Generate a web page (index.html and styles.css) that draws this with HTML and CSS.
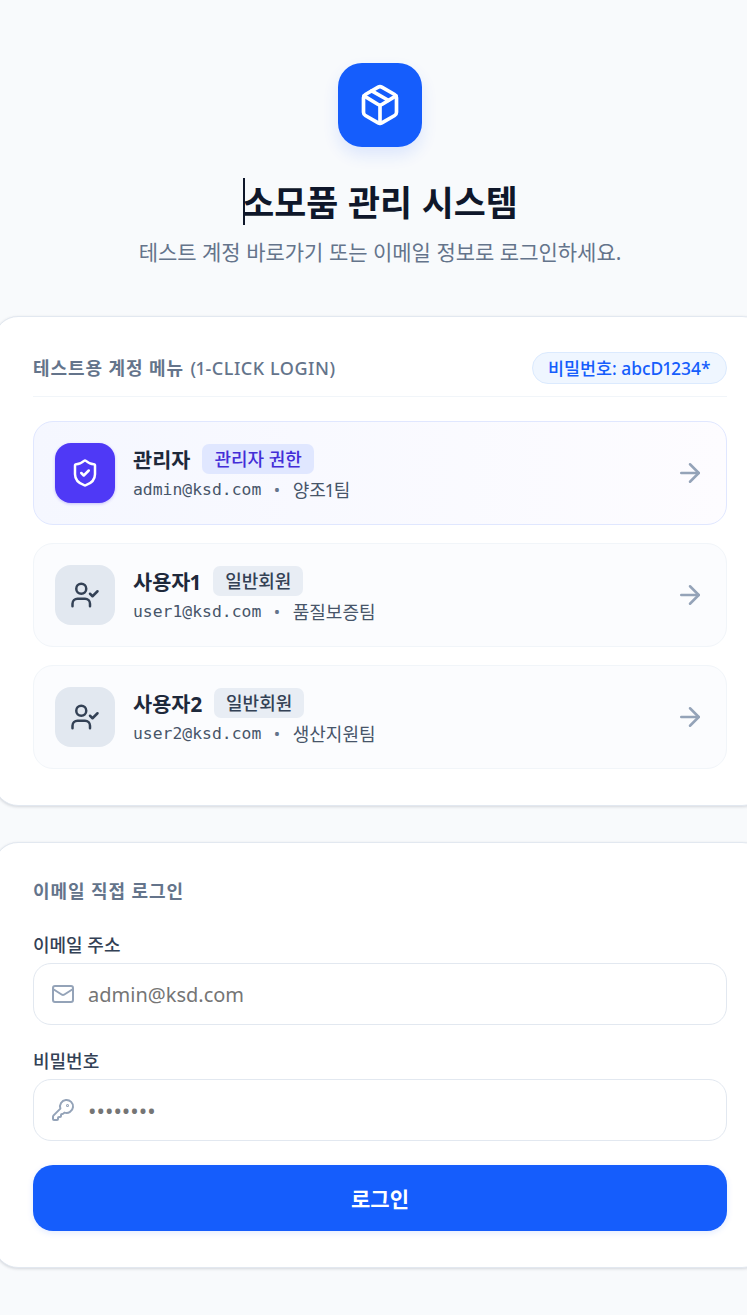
FILE: index.html
```html
<!DOCTYPE html>
<html lang="ko">
<head>
<meta charset="utf-8">
<title>소모품 관리 시스템</title>
<link rel="stylesheet" href="styles.css">
</head>
<body>
<main class="page">
  <header class="hero">
    <div class="logo">
      <svg class="ic ic-logo" viewBox="0 0 24 24"><path d="M11 21.73a2 2 0 0 0 2 0l7-4A2 2 0 0 0 21 16V8a2 2 0 0 0-1-1.73l-7-4a2 2 0 0 0-2 0l-7 4A2 2 0 0 0 3 8v8a2 2 0 0 0 1 1.73z"/><path d="M12 22V12"/><path d="m3.3 7 7.703 4.734a2 2 0 0 0 1.994 0L20.7 7"/><path d="m7.5 4.27 9 5.15"/></svg>
    </div>
    <h1 class="title"><span class="caret"></span>소모품 관리 시스템</h1>
    <p class="subtitle">테스트 계정 바로가기 또는 이메일 정보로 로그인하세요.</p>
  </header>

  <section class="card card-accounts">
    <div class="card-head">
      <h2 class="section-title">테스트용 계정 메뉴 <span class="section-latin">(1-CLICK LOGIN)</span></h2>
      <span class="pill">비밀번호: abcD1234*</span>
    </div>
    <div class="rows">
      <div class="row row-admin">
        <div class="avatar avatar-admin">
          <svg class="ic ic-30" viewBox="0 0 24 24"><path d="M20 13c0 5-3.5 7.5-7.66 8.95a1 1 0 0 1-.67-.01C7.5 20.5 4 18 4 13V6a1 1 0 0 1 1-1c2 0 4.5-1.2 6.24-2.72a1.17 1.17 0 0 1 1.52 0C14.51 3.81 17 5 19 5a1 1 0 0 1 1 1z"/><path d="m9 12 2 2 4-4"/></svg>
        </div>
        <div class="info">
          <div class="name-line"><span class="name">관리자</span><span class="badge badge-admin">관리자 권한</span></div>
          <div class="meta"><span class="mono">admin@ksd.com</span><span class="dot">•</span><span>양조1팀</span></div>
        </div>
        <svg class="ic ic-30 ic-arrow" viewBox="0 0 24 24"><path d="M5 12h14"/><path d="m12 5 7 7-7 7"/></svg>
      </div>
      <div class="row">
        <div class="avatar">
          <svg class="ic ic-30" viewBox="0 0 24 24"><path d="m16 11 2 2 4-4"/><path d="M16 21v-2a4 4 0 0 0-4-4H6a4 4 0 0 0-4 4v2"/><circle cx="9" cy="7" r="4"/></svg>
        </div>
        <div class="info">
          <div class="name-line"><span class="name">사용자1</span><span class="badge">일반회원</span></div>
          <div class="meta"><span class="mono">user1@ksd.com</span><span class="dot">•</span><span>품질보증팀</span></div>
        </div>
        <svg class="ic ic-30 ic-arrow" viewBox="0 0 24 24"><path d="M5 12h14"/><path d="m12 5 7 7-7 7"/></svg>
      </div>
      <div class="row">
        <div class="avatar">
          <svg class="ic ic-30" viewBox="0 0 24 24"><path d="m16 11 2 2 4-4"/><path d="M16 21v-2a4 4 0 0 0-4-4H6a4 4 0 0 0-4 4v2"/><circle cx="9" cy="7" r="4"/></svg>
        </div>
        <div class="info">
          <div class="name-line"><span class="name">사용자2</span><span class="badge">일반회원</span></div>
          <div class="meta"><span class="mono">user2@ksd.com</span><span class="dot">•</span><span>생산지원팀</span></div>
        </div>
        <svg class="ic ic-30 ic-arrow" viewBox="0 0 24 24"><path d="M5 12h14"/><path d="m12 5 7 7-7 7"/></svg>
      </div>
    </div>
  </section>

  <section class="card card-form">
    <h2 class="section-title form-title">이메일 직접 로그인</h2>
    <label class="label" for="email">이메일 주소</label>
    <div class="field">
      <svg class="ic ic-field" viewBox="0 0 24 24"><path d="m22 7-8.991 5.727a2 2 0 0 1-2.009 0L2 7"/><rect x="2" y="4" width="20" height="16" rx="2"/></svg>
      <input class="input" id="email" type="email" placeholder="admin@ksd.com">
    </div>
    <label class="label label-pw" for="pw">비밀번호</label>
    <div class="field">
      <svg class="ic ic-field" viewBox="0 0 24 24"><path d="M2.586 17.414A2 2 0 0 0 2 18.828V21a1 1 0 0 0 1 1h3a1 1 0 0 0 1-1v-1a1 1 0 0 1 1-1h1a1 1 0 0 0 1-1v-1a1 1 0 0 1 1-1h.172a2 2 0 0 0 1.414-.586l.814-.814a6.5 6.5 0 1 0-4-4z"/><circle cx="16.5" cy="7.5" r=".5"/></svg>
      <input class="input input-pw" id="pw" type="password" placeholder="••••••••">
    </div>
    <button class="submit" type="button">로그인</button>
  </section>
</main>
</body>
</html>
```
FILE: styles.css
```css
* { box-sizing: border-box; }
html, body { margin: 0; padding: 0; overflow-x: hidden; }
body {
  background: #f8fafc;
  color: #0f172a;
  font-family: "Noto Sans", "Noto Sans CJK KR", sans-serif;
  font-variant-numeric: proportional-nums;
}
.page { width: 760px; padding: 63px 0 47px; }

.hero { display: flex; flex-direction: column; align-items: center; margin-bottom: 48px; }
.logo {
  width: 84px; height: 84px; border-radius: 24px; background: #155dfc;
  display: flex; align-items: center; justify-content: center;
  box-shadow: 0 8px 16px rgba(21, 93, 252, .12);
}
.ic { fill: none; stroke: currentColor; stroke-width: 2; stroke-linecap: round; stroke-linejoin: round; flex: none; display: block; }
.ic-logo { width: 44px; height: 44px; color: #fff; }
.ic-30 { width: 30px; height: 30px; }
.ic-arrow { color: #94a3b8; }
.ic-field { width: 24px; height: 24px; color: #94a3b8; }

.title { margin: 31px 0 0; font-size: 34.8px; line-height: 47px; font-weight: 700; font-family: "Noto Sans CJK KR", sans-serif; position: relative; }
.caret { position: absolute; left: 1px; top: 0; width: 2px; height: 47px; background: #0f172a; }
.subtitle { margin: 11px 0 0; font-size: 21px; line-height: 32px; color: #64748b; }

.card {
  margin: 0 -6px;
  background: #fff; border: 1px solid #e2e8f0; border-radius: 24px;
  padding: 35px 38px; box-shadow: 0 1px 3px rgba(15, 23, 42, .15);
}
.card-accounts { margin-bottom: 36px; padding-bottom: 36px; }
.card-head { display: flex; justify-content: space-between; align-items: flex-start; height: 45px; border-bottom: 1px solid #f1f5f9; }
.section-title { margin: 0; font-size: 18px; line-height: 32px; font-weight: 600; color: #64748b; letter-spacing: .9px; }
.section-latin { font-weight: 500; letter-spacing: .55px; margin-left: 1px; }
.pill {
  height: 32px; padding: 0 15.5px; border-radius: 16px; background: #eff6ff; border: 1px solid #dbeafe;
  color: #155dfc; font-size: 17.4px; font-weight: 500; line-height: 30px; white-space: nowrap;
}
.rows { display: flex; flex-direction: column; gap: 18px; margin-top: 24px; }
.row {
  height: 104px; padding: 0 21px; display: flex; align-items: center; gap: 18px;
  background: #fbfcfe; border: 1px solid #f1f5f9; border-radius: 20px;
}
.row-admin { background: linear-gradient(90deg, #f5f7ff, #fdfcff); border-color: #e0e7ff; }
.avatar {
  width: 60px; height: 60px; border-radius: 16px; background: #e2e8f0; color: #334155;
  display: flex; align-items: center; justify-content: center; flex: none;
}
.avatar-admin { background: #4f39f6; color: #fff; box-shadow: 0 1px 3px rgba(79, 57, 246, .3); }
.info { flex: 1; display: flex; flex-direction: column; padding-top: 3px; }
.name-line { display: flex; align-items: center; gap: 12px; height: 30px; }
.name { font-size: 20.8px; font-weight: 700; color: #1e293b; }
.badge { height: 30px; padding: 0 12px; border-radius: 7px; background: #e8edf4; color: #334155; font-size: 18px; font-weight: 500; line-height: 30px; }
.badge-admin { background: #e0e7ff; color: #432dd7; }
.meta { display: flex; align-items: center; font-size: 18px; line-height: 30px; color: #475569; padding-top: 1px; }
.mono { font-family: "DejaVu Sans Mono", monospace; font-size: 16.4px; }
.dot { margin: 0 12.5px; color: #64748b; font-size: 17px; }

.card-form { padding-top: 36px; padding-bottom: 36px; }
.form-title { line-height: 25px; letter-spacing: .9px; margin-bottom: 27px; }
.label { display: block; font-size: 18px; line-height: 28px; font-weight: 500; color: #334155; margin-bottom: 4px; }
.label-pw { margin-top: 22px; }
.field {
  height: 62px; border: 1px solid #e2e8f0; border-radius: 18px; background: #fff;
  display: flex; align-items: center; gap: 13px; padding-left: 17px;
}
.input { flex: 1; min-width: 0; border: 0; outline: 0; background: transparent; font: inherit; font-size: 20px; color: #0f172a; padding: 0; }
.input-pw { font-size: 22.5px; }
.input::placeholder { color: #757575; opacity: 1; }
.submit {
  display: block; width: 100%; height: 66px; margin-top: 24px; border: 0; border-radius: 20px;
  background: #155dfc; color: #fff; font: inherit; font-size: 21px; font-weight: 700;
  box-shadow: 0 2px 6px rgba(21, 93, 252, .12);
}
```
